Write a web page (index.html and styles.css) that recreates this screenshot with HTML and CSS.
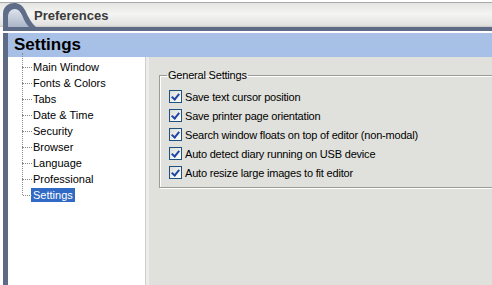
FILE: index.html
```html
<!DOCTYPE html>
<html lang="en">
<head>
    <meta charset="UTF-8">
    <meta name="viewport" content="width=device-width, initial-scale=1.0">
    <title>Preferences</title>
    <link rel="stylesheet" href="styles.css">
</head>
<body>
    <div class="window">
        <div class="titlebar">
            <svg class="tab" width="36" height="27" viewBox="0 0 36 27">
                <defs>
                    <linearGradient id="tabFill" x1="0" y1="0" x2="0" y2="1">
                        <stop offset="0" stop-color="#dfe4ec"/>
                        <stop offset="1" stop-color="#aab5c8"/>
                    </linearGradient>
                </defs>
                <path d="M3 27 V14 C3 7 8 3 14 3 C19 3 22 5 25 10 C28 16 31 23 36 27 Z" fill="#5f6d88"/>
                <path d="M8 27 V17 C8 12 11 9 15 9 C18 9 20 11 22 15 C24 20 26 24 29 27 Z" fill="url(#tabFill)"/>
            </svg>
            <span class="title">Preferences</span>
        </div>
        <div class="rule"></div>
        <div class="frame">
            <div class="header">Settings</div>
            <div class="body">
                <ul class="tree">
                    <li>Main Window</li>
                    <li>Fonts &amp; Colors</li>
                    <li>Tabs</li>
                    <li>Date &amp; Time</li>
                    <li>Security</li>
                    <li>Browser</li>
                    <li>Language</li>
                    <li>Professional</li>
                    <li><span class="selected">Settings</span></li>
                </ul>
                <div class="panel">
                    <fieldset class="group">
                        <legend>General Settings</legend>
                        <label class="check"><span class="box"></span>Save text cursor position</label>
                        <label class="check"><span class="box"></span>Save printer page orientation</label>
                        <label class="check"><span class="box"></span>Search window floats on top of editor (non-modal)</label>
                        <label class="check"><span class="box"></span>Auto detect diary running on USB device</label>
                        <label class="check"><span class="box"></span>Auto resize large images to fit editor</label>
                    </fieldset>
                </div>
            </div>
        </div>
    </div>
</body>
</html>
```

FILE: styles.css
```css
body {
    margin: 0;
    background: #ffffff;
    font-family: "Liberation Sans", Arial, sans-serif;
    font-size: 11px;
    color: #000;
}
.window {
    width: 492px;
    height: 285px;
    display: flex;
    flex-direction: column;
    overflow: hidden;
}
.titlebar {
    height: 27px;
    display: flex;
    align-items: flex-end;
    background: linear-gradient(#ffffff 0, #ffffff 2px, #a9a9a9 2px, #a9a9a9 3px, #e4e4e2 3px, #f4f4f3 14px, #e2e2e0 25px, #c8c8c6 27px);
}
.tab {
    flex: none;
    display: block;
}
.title {
    font-size: 13px;
    font-weight: bold;
    color: #3a3a3a;
    margin-left: -2px;
    padding-bottom: 4px;
}
.rule {
    height: 4px;
    background: #5d6b86;
    border-bottom: 2px solid #ffffff;
    margin-left: 3px;
}
.frame {
    flex: 1;
    display: flex;
    flex-direction: column;
    margin-left: 3px;
    border-left: 5px solid #5d6b86;
    min-height: 0;
}
.header {
    height: 24px;
    background: linear-gradient(#a9c1e6, #a6bfe7);
    font-size: 17px;
    font-weight: bold;
    line-height: 24px;
    padding-left: 6px;
}
.body {
    flex: 1;
    display: flex;
    min-height: 0;
}
.tree {
    flex: none;
    width: 138px;
    margin: 0;
    padding: 2px 0 0 25px;
    box-sizing: border-box;
    list-style: none;
    background: #ffffff;
    border-right: 1px solid #cfcfcf;
}
.tree li {
    position: relative;
    height: 16px;
    line-height: 16px;
}
.tree li::before {
    content: "";
    position: absolute;
    left: -11px;
    top: -8px;
    height: 16px;
    border-left: 1px dotted #8a8a8a;
}
.tree li:first-child::before {
    top: -6px;
    height: 14px;
}
.tree li::after {
    content: "";
    position: absolute;
    left: -10px;
    top: 8px;
    width: 9px;
    border-top: 1px dotted #8a8a8a;
}
.selected {
    background: #316ac5;
    color: #ffffff;
    padding: 1px 2px;
    margin-left: -2px;
}
.panel {
    flex: 1;
    min-width: 0;
    overflow: hidden;
    background: linear-gradient(90deg, #ececea 0, #ececea 3px, #e0e1dc 3px);
    padding: 12px 0 0 13px;
}
.group {
    width: 380px;
    margin: 0;
    padding: 5px 0 5px 9px;
    border: 1px solid #9b9c98;
    box-shadow: inset 1px 1px 0 #ffffff, 1px 1px 0 #ffffff;
}
.group legend {
    padding: 0 1px;
    margin-left: -2px;
    line-height: 13px;
    letter-spacing: -0.2px;
}
.check {
    display: flex;
    align-items: center;
    height: 19px;
    letter-spacing: -0.2px;
    white-space: nowrap;
}
.box {
    flex: none;
    width: 11px;
    height: 11px;
    border: 1px solid #1c5180;
    background: linear-gradient(135deg, #dcdcd7, #ffffff);
    margin-right: 3px;
    position: relative;
}
.box::after {
    content: "";
    position: absolute;
    left: 3px;
    top: 1px;
    width: 3px;
    height: 6px;
    border-right: 2px solid #2147a6;
    border-bottom: 2px solid #2147a6;
    transform: rotate(40deg);
}
```
